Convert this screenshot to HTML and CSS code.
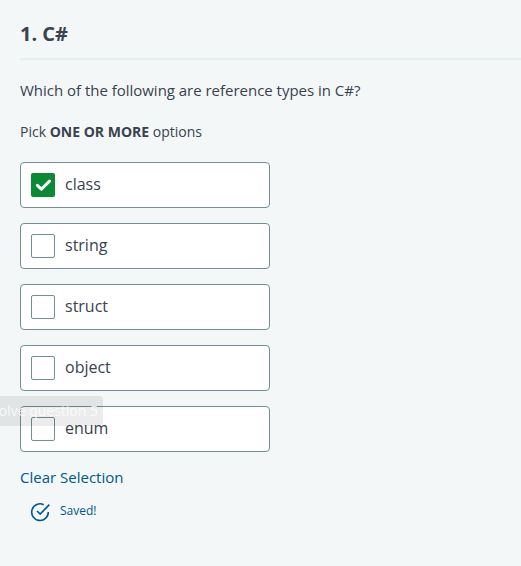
FILE: index.html
```html
<!DOCTYPE html>
<html lang="en">
<head>
<meta charset="utf-8">
<title>C# question</title>
<link rel="stylesheet" href="styles.css">
</head>
<body>
<main class="question">
  <h1 class="title">1. C#</h1>
  <p class="prompt">Which of the following are reference types in C#?</p>
  <p class="hint">Pick <strong>ONE OR MORE</strong> options</p>
  <div class="options">
    <div class="option"><span class="box checked"><svg width="24" height="24" viewBox="0 0 24 24"><path d="M6.3 12.4l4 3.8 8.2-8.1" fill="none" stroke="#fff" stroke-width="3" stroke-linecap="round" stroke-linejoin="round"/></svg></span><span class="label">class</span></div>
    <div class="option"><span class="box"></span><span class="label">string</span></div>
    <div class="option"><span class="box"></span><span class="label">struct</span></div>
    <div class="option"><span class="box"></span><span class="label">object</span></div>
    <div class="option"><span class="box"></span><span class="label">enum</span></div>
  </div>
  <a class="clear">Clear Selection</a>
  <div class="status">
    <svg width="20" height="20" viewBox="0 0 20 20" fill="none" stroke="#00578e" stroke-width="1.6"><path d="M13.7 2.7A8.3 8.3 0 1 0 18.3 10M7 9l3.2 3.1L19.3 2.6"/></svg>
    <span>Saved!</span>
  </div>
</main>
<div class="tooltip">olve question 5</div>
</body>
</html>
```

FILE: styles.css
```css
body {
  margin: 0;
  height: 566px;
  overflow: hidden;
  position: relative;
  background: #f3f7f8;
  color: #39424e;
  font-family: "Open Sans", sans-serif;
}
.question { padding: 20px 0 0 20px; }
.title {
  margin: 0;
  height: 38px;
  border-bottom: 2px solid #e6eeee;
  font-size: 20px;
  line-height: 28px;
  font-weight: 700;
}
.prompt { margin: 18px 0 0; font-size: 15px; line-height: 24px; letter-spacing: -.02px; }
.hint { margin: 20px 0 0; font-size: 14px; line-height: 20px; }
.options {
  display: flex;
  flex-direction: column;
  gap: 15px;
  width: 250px;
  margin-top: 20px;
}
.option {
  display: flex;
  align-items: center;
  gap: 10px;
  box-sizing: border-box;
  height: 46px;
  padding-left: 10px;
  border: 1px solid #738f93;
  border-radius: 4px;
  background: #fff;
}
.box {
  box-sizing: border-box;
  width: 24px;
  height: 24px;
  border: 1px solid #738f93;
  border-radius: 2px;
}
.checked { border: 0; background: #0b8a35; }
.checked svg { display: block; }
.label { font-size: 16px; line-height: 24px; margin-top: -2px; }
.clear {
  display: block;
  margin-top: 13px;
  color: #00578e;
  font-size: 15px;
  line-height: 24px;
}
.status {
  display: flex;
  align-items: center;
  gap: 10px;
  height: 20px;
  margin: 13px 0 0 10px;
  color: #00578e;
  font-size: 12px;
}
.status span { margin-top: -4px; }
.tooltip {
  position: absolute;
  top: 396px;
  right: 418px;
  height: 30px;
  padding-right: 5px;
  border-radius: 0 4px 4px 0;
  background: rgba(0, 0, 0, .075);
  color: rgba(255, 255, 255, .8);
  font-size: 14px;
  line-height: 30px;
  white-space: nowrap;
}
```
